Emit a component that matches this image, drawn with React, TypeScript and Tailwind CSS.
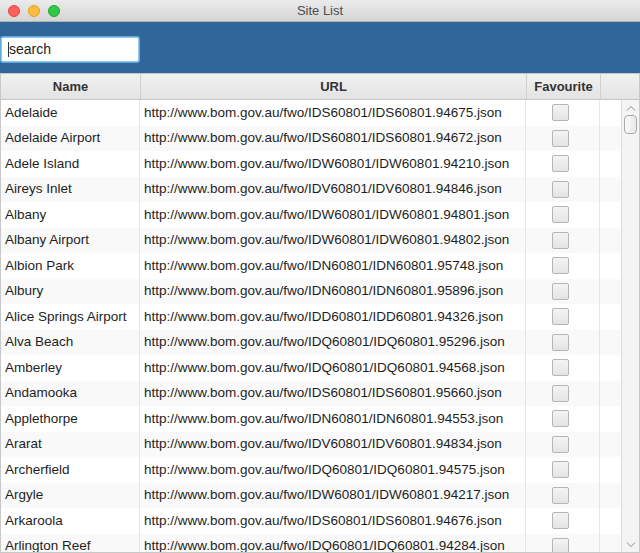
import React from 'react';

const sites: [string, string][] = [
  ['Adelaide', 'IDS60801/IDS60801.94675'],
  ['Adelaide Airport', 'IDS60801/IDS60801.94672'],
  ['Adele Island', 'IDW60801/IDW60801.94210'],
  ['Aireys Inlet', 'IDV60801/IDV60801.94846'],
  ['Albany', 'IDW60801/IDW60801.94801'],
  ['Albany Airport', 'IDW60801/IDW60801.94802'],
  ['Albion Park', 'IDN60801/IDN60801.95748'],
  ['Albury', 'IDN60801/IDN60801.95896'],
  ['Alice Springs Airport', 'IDD60801/IDD60801.94326'],
  ['Alva Beach', 'IDQ60801/IDQ60801.95296'],
  ['Amberley', 'IDQ60801/IDQ60801.94568'],
  ['Andamooka', 'IDS60801/IDS60801.95660'],
  ['Applethorpe', 'IDN60801/IDN60801.94553'],
  ['Ararat', 'IDV60801/IDV60801.94834'],
  ['Archerfield', 'IDQ60801/IDQ60801.94575'],
  ['Argyle', 'IDW60801/IDW60801.94217'],
  ['Arkaroola', 'IDS60801/IDS60801.94676'],
  ['Arlington Reef', 'IDQ60801/IDQ60801.94284'],
];

const TitleBar = () => (
  <div className="relative flex h-[22px] items-center justify-center border-b border-[#b4b4b4] bg-gradient-to-b from-[#ebebeb] to-[#d5d5d5]">
    <div className="absolute left-[8px] top-[5px] flex gap-[8px]">
      <span className="h-[12px] w-[12px] rounded-full border border-[#e2463f] bg-[#fc605c]" />
      <span className="h-[12px] w-[12px] rounded-full border border-[#e1a116] bg-[#fdbc40]" />
      <span className="h-[12px] w-[12px] rounded-full border border-[#12ac28] bg-[#34c84a]" />
    </div>
    <span className="text-[13px] text-[#4d4d4d]">Site List</span>
  </div>
);

const Checkbox = () => (
  <span className="block h-[17px] w-[17px] rounded-[2px] border border-[#b5b5b5] bg-gradient-to-b from-[#f4f4f4] to-[#e4e4e4]" />
);

const Scrollbar = () => (
  <div className="flex w-[18px] flex-col items-center border-l border-[#dcdcdc] bg-[#f4f4f4]">
    <svg width="10" height="6" viewBox="0 0 10 6" className="mt-[5px]">
      <path d="M1 5.5 L5 1.5 L9 5.5" fill="none" stroke="#8a8a8a" strokeWidth="1" />
    </svg>
    <span className="mt-[4px] h-[19px] w-[13px] rounded-[4px] border border-[#a9a9a9] bg-gradient-to-r from-[#fafafa] to-[#e9e9e9]" />
    <div className="flex-1" />
    <svg width="10" height="6" viewBox="0 0 10 6" className="mb-[4px]">
      <path d="M1 0.5 L5 4.5 L9 0.5" fill="none" stroke="#8a8a8a" strokeWidth="1" />
    </svg>
  </div>
);

const App = () => {
  return (
    <div className="flex h-[553px] w-[640px] flex-col overflow-hidden bg-white font-['Liberation_Sans',Arial,sans-serif]">
      <TitleBar />

      <div className="flex h-[51px] items-center bg-[#31669a] px-[1px] pt-[4px]">
        <div className="flex h-[25px] w-[138px] items-center rounded-[2px] border border-[#8ec7ea] bg-white pl-[6px] shadow-[0_0_0_1px_#5fa9db]">
          <span className="h-[15px] w-[1px] bg-[#333]" />
          <span className="text-[14px] text-[#222]">search</span>
        </div>
      </div>

      <div className="flex min-h-0 flex-1 flex-col border-x border-b border-[#c8c8c8]">
        <div className="grid h-[27px] grid-cols-[140px_386px_74px_1fr] border-y border-[#c5c5c5] bg-gradient-to-b from-[#f1f1f1] to-[#e3e3e3] text-[13px] font-bold text-[#333]">
          <div className="flex items-center justify-center border-r border-[#cfcfcf]">Name</div>
          <div className="flex items-center justify-center border-r border-[#cfcfcf]">URL</div>
          <div className="flex items-center justify-center border-r border-[#cfcfcf]">Favourite</div>
          <div />
        </div>

        <div className="flex min-h-0 flex-1">
          <div className="min-w-0 flex-1 overflow-hidden">
            {sites.map(([name, path], i) => (
              <div
                key={name}
                className={`grid h-[25.5px] grid-cols-[139px_386px_74px_1fr] text-[13.5px] text-[#1e1e1e] ${
                  i % 2 === 1 ? 'bg-[#f9f9f9]' : 'bg-white'
                }`}
              >
                <div className="flex items-center border-r border-[#e6e6e6] pl-[4px] whitespace-nowrap">{name}</div>
                <div className="flex items-center border-r border-[#e6e6e6] pl-[4px] whitespace-nowrap">
                  http://www.bom.gov.au/fwo/{path}.json
                </div>
                <div className="flex items-center justify-center border-r border-[#e6e6e6] pr-[5px]">
                  <Checkbox />
                </div>
                <div />
              </div>
            ))}
          </div>
          <Scrollbar />
        </div>
      </div>
    </div>
  );
};

export default App;
